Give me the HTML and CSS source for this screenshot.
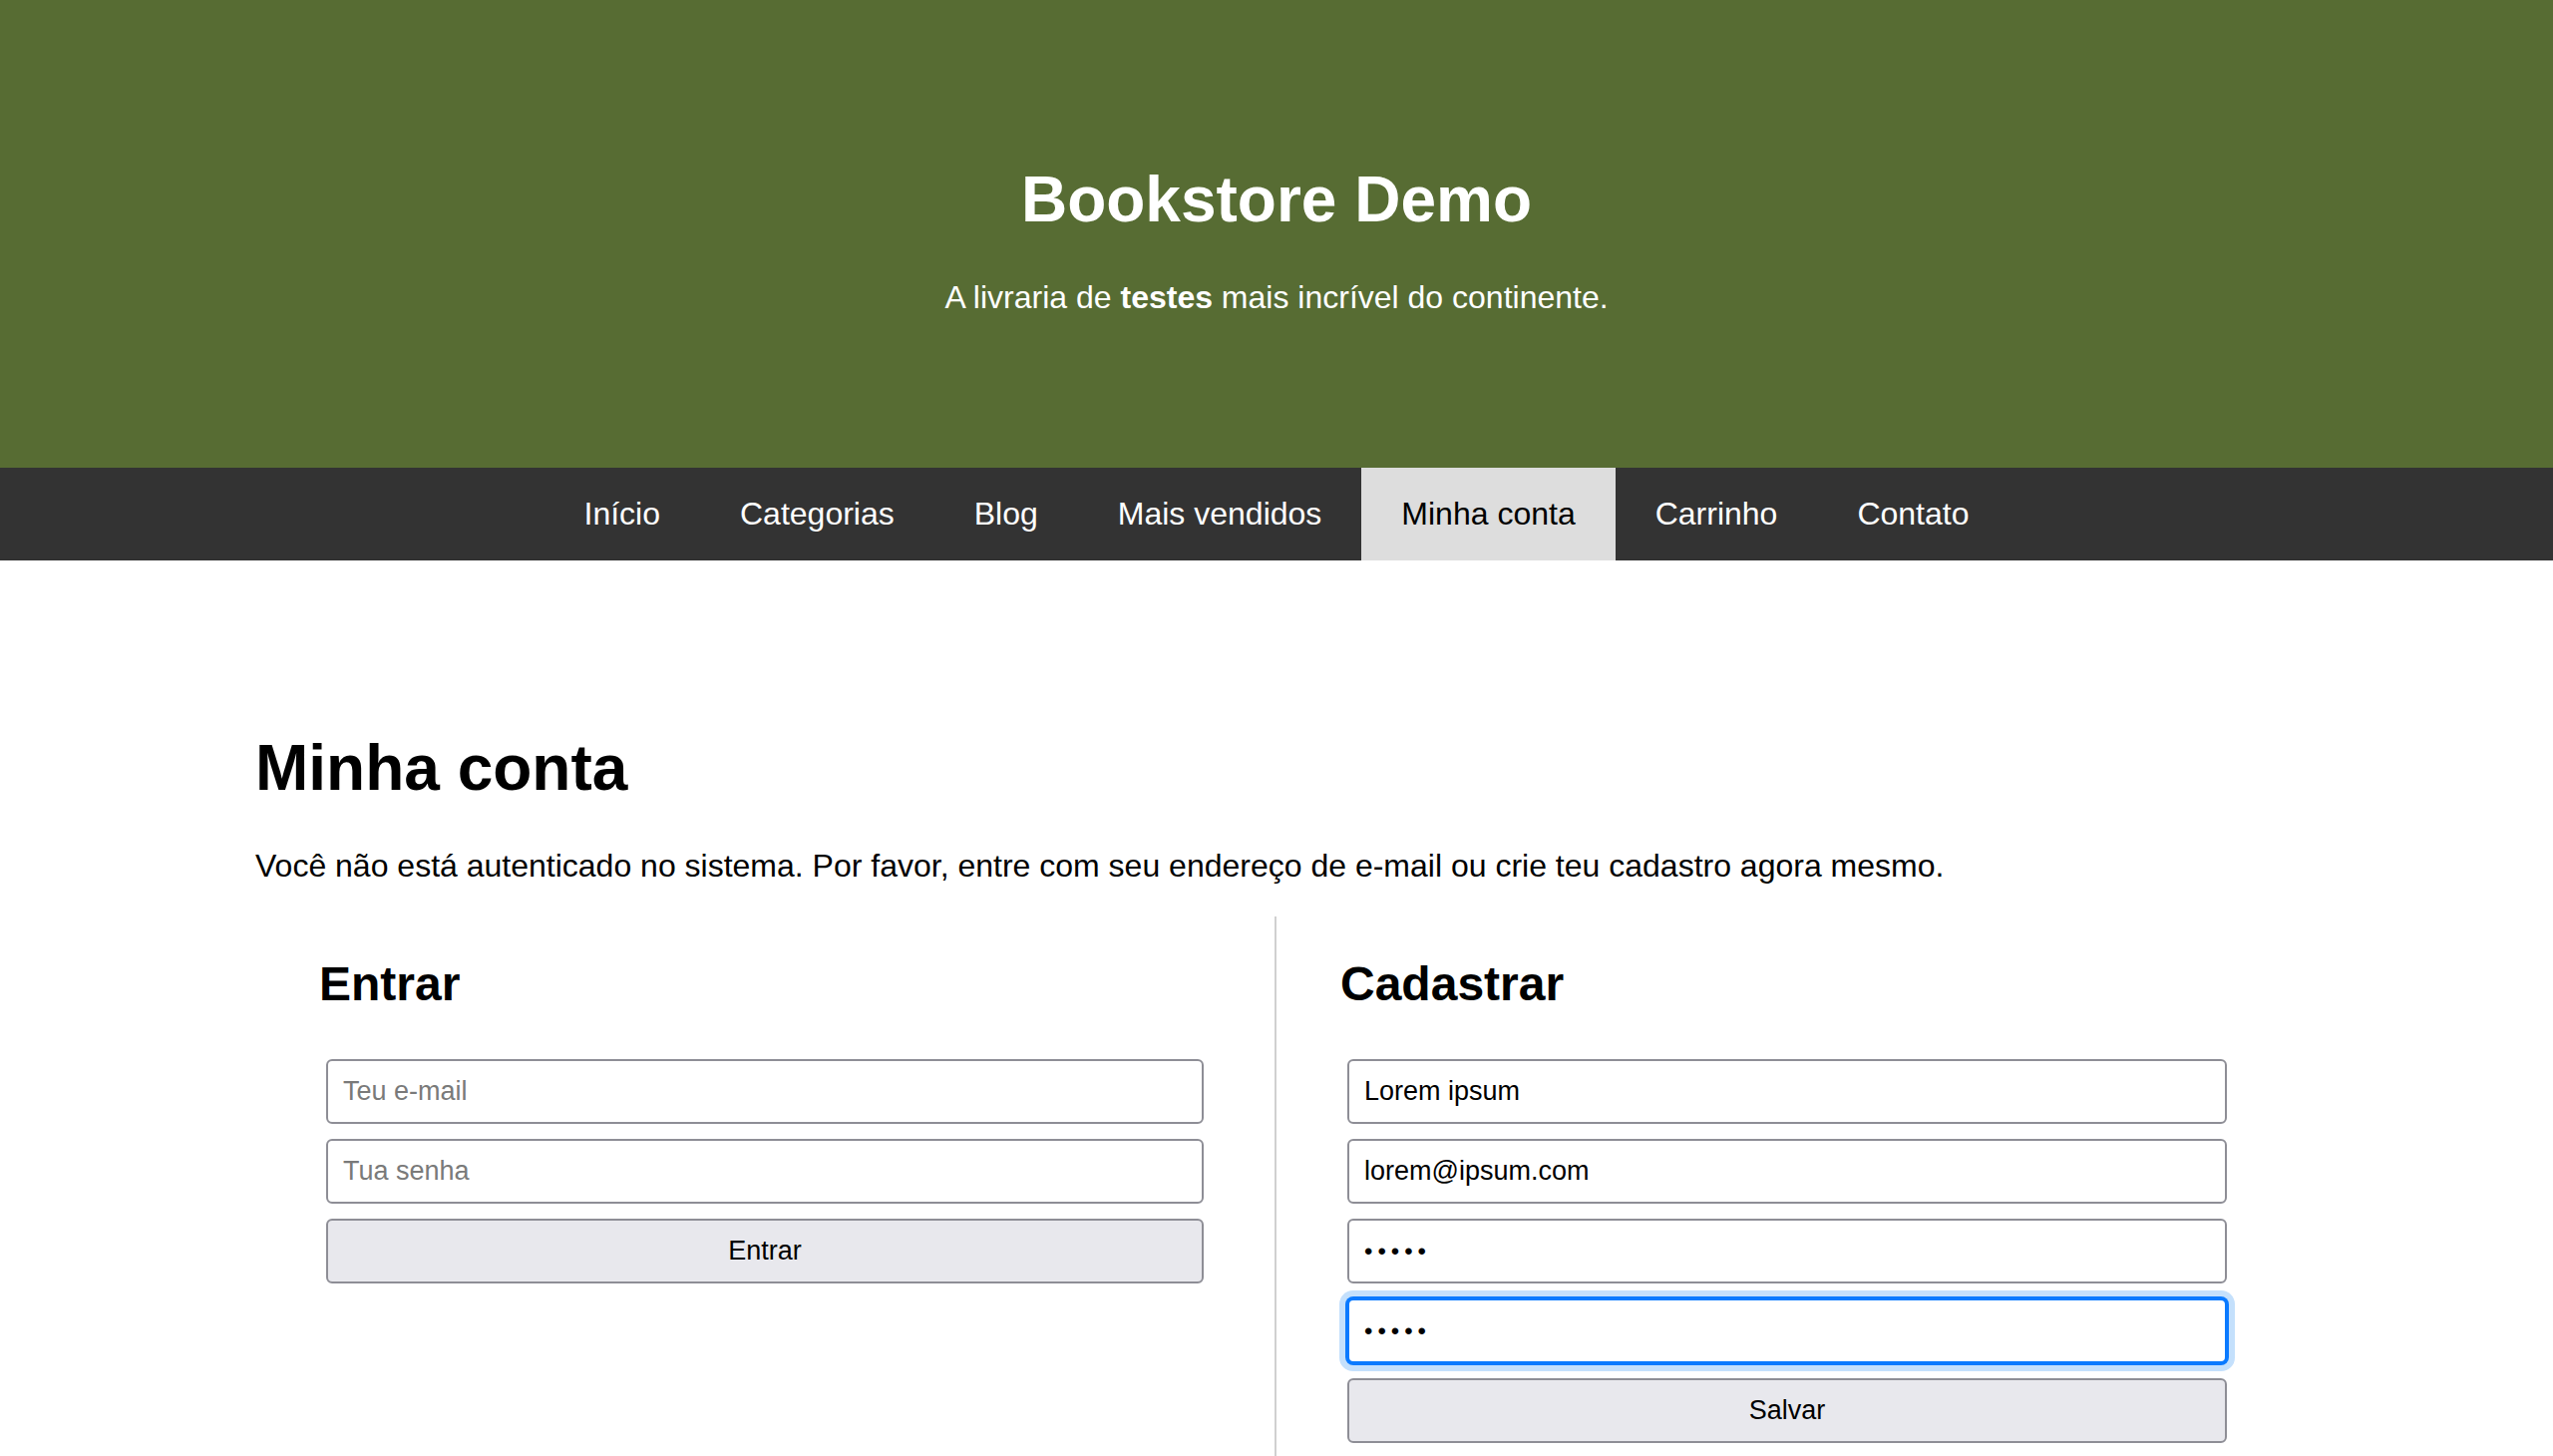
FILE: index.html
```html
<!DOCTYPE html>
<html lang="pt-BR">
<head>
<meta charset="utf-8">
<title>Bookstore Demo - Minha conta</title>
<link rel="stylesheet" href="styles.css">
</head>
<body>
<header class="site-header">
  <h1 class="site-title">Bookstore Demo</h1>
  <p class="site-tagline">A livraria de <strong>testes</strong> mais incrível do continente.</p>
</header>
<nav class="main-nav">
  <a class="nav-link" href="#">Início</a>
  <a class="nav-link" href="#">Categorias</a>
  <a class="nav-link" href="#">Blog</a>
  <a class="nav-link" href="#">Mais vendidos</a>
  <a class="nav-link nav-link--active" href="#">Minha conta</a>
  <a class="nav-link" href="#">Carrinho</a>
  <a class="nav-link" href="#">Contato</a>
</nav>
<main class="content">
  <h1 class="page-title">Minha conta</h1>
  <p class="page-intro">Você não está autenticado no sistema. Por favor, entre com seu endereço de e-mail ou crie teu cadastro agora mesmo.</p>
  <div class="account-columns">
    <section class="account-col account-col--left">
      <h2 class="col-title">Entrar</h2>
      <form class="account-form">
        <input class="field" type="email" placeholder="Teu e-mail">
        <input class="field" type="password" placeholder="Tua senha">
        <button class="btn" type="button">Entrar</button>
      </form>
    </section>
    <section class="account-col">
      <h2 class="col-title">Cadastrar</h2>
      <form class="account-form">
        <input class="field" type="text" value="Lorem ipsum">
        <input class="field" type="email" value="lorem@ipsum.com">
        <input class="field" type="password" value="12345">
        <input class="field field--focus" type="password" value="12345">
        <button class="btn" type="button">Salvar</button>
      </form>
    </section>
  </div>
</main>
</body>
</html>
```
FILE: styles.css
```css
* {
  box-sizing: border-box;
}

body {
  margin: 0;
  font-family: "Liberation Sans", Arial, Helvetica, sans-serif;
  font-size: 32px;
  color: #000;
  background: #fff;
}

.site-header {
  background: #576c33;
  color: #fff;
  text-align: center;
  padding: 120px 0 120px;
}

.site-title {
  font-size: 64px;
  font-weight: bold;
  margin: 43px 0;
  line-height: normal;
}

.site-tagline {
  margin: 0 0 32px;
  font-size: 32px;
}

.main-nav {
  background: #333;
  display: flex;
  justify-content: center;
}

.nav-link {
  color: #fff;
  text-decoration: none;
  font-size: 32px;
  padding: 28px 40px;
  line-height: normal;
}

.nav-link--active {
  background: #ddd;
  color: #000;
}

.content {
  width: 2048px;
  margin: 0 auto;
  padding-top: 128px;
}

.page-title {
  font-size: 64px;
  font-weight: bold;
  margin: 43px 0;
}

.page-intro {
  margin: 0 0 32px;
  font-size: 32px;
}

.account-columns {
  display: grid;
  grid-template-columns: 1fr 1fr;
}

.account-col {
  padding: 0 64px 40px;
}

.account-col--left {
  border-right: 2px solid #d0d0d0;
}

.col-title {
  font-size: 48px;
  font-weight: bold;
  margin: 40px 0 40px;
}

.account-form {
  display: flex;
  flex-direction: column;
  gap: 15px;
  padding: 8px 7px;
}

.field,
.btn {
  height: 65px;
  font-family: "Liberation Sans", Arial, sans-serif;
  font-size: 27px;
  border: 2px solid #8e8e96;
  border-radius: 6px;
  color: #000;
}

.field {
  background: #fff;
  padding: 0 15px;
  outline: none;
}

.field[type="password"] {
  font-size: 24px;
  letter-spacing: 5px;
}

.field::placeholder {
  color: #7a7a7a;
  font-size: 27px;
  letter-spacing: 0;
}

.field--focus {
  border-color: #0a7aff;
  box-shadow: 0 0 0 2px #0a7aff, 0 0 0 8px #c4e0fc;
}

.btn {
  background: #e8e8ed;
  text-align: center;
  padding: 0;
}
```
